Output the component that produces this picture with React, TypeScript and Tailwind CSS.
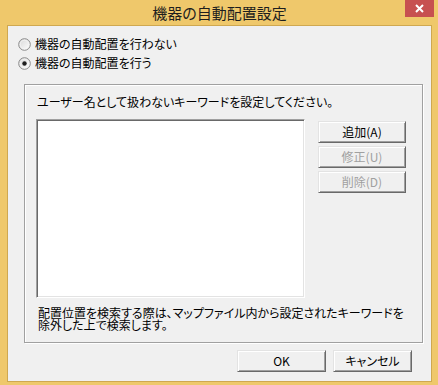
import React from "react";

const font = "font-['Noto_Sans_CJK_JP','Noto_Sans_CJK_SC',sans-serif] [font-feature-settings:'palt']";

function Radio({ checked }: { checked?: boolean }) {
  return (
    <svg width="13" height="13" viewBox="0 0 13 13" className="shrink-0">
      <defs>
        <linearGradient id={checked ? "rg1" : "rg0"} x1="0" y1="0" x2="1" y2="1">
          <stop offset="0" stopColor="#d6d6d6" />
          <stop offset="1" stopColor="#ffffff" />
        </linearGradient>
      </defs>
      <circle cx="6.5" cy="6.5" r="5.8" fill={`url(#${checked ? "rg1" : "rg0"})`} stroke="#8a8a8a" strokeWidth="1" />
      <circle cx="6.5" cy="6.5" r="4.3" fill="none" stroke="#f4f4f4" strokeWidth="0.8" />
      {checked && <circle cx="6.5" cy="6.5" r="2.2" fill="#1e1e1e" />}
    </svg>
  );
}

function Btn({ label, w, disabled }: { label: string; w: string; disabled?: boolean }) {
  return (
    <div
      className={`${w} h-[22px] flex items-center justify-center bg-[#f0f0f0] border border-t-[#e3e3e3] border-l-[#e3e3e3] border-r-[#696969] border-b-[#696969] shadow-[inset_1px_1px_0_#ffffff,inset_-1px_-1px_0_#a0a0a0] text-[12px] leading-[14px] ${
        disabled ? "text-[#a0a0a0]" : "text-black"
      }`}
    >
      {label}
    </div>
  );
}

export default function App() {
  return (
    <div className={`w-[438px] h-[385px] bg-[#efc86b] flex flex-col ${font}`}>
      <div className="h-[25px] relative flex items-center justify-center">
        <span className="text-[15px] leading-[18px] text-[#1e1e1e] pl-[1px]">機器の自動配置設定</span>
        <div className="absolute left-[405px] top-0 w-[29px] h-[17px] bg-[#c75050] flex items-center justify-center">
          <svg width="9" height="9" viewBox="0 0 9 9">
            <path d="M1 1 L8 8 M8 1 L1 8" stroke="#ffffff" strokeWidth="2" />
          </svg>
        </div>
      </div>
      <div className="ml-[7px] w-[425px] h-[357px] border border-[#cfa850] bg-[#f0f0f0] flex flex-col text-black text-[12px]">
        <div className="pl-[10px] pt-[10px] flex flex-col gap-[3px]">
          <div className="h-[16px] flex items-center gap-[4px]">
            <Radio />
            <span className="leading-[16px]">機器の自動配置を行わない</span>
          </div>
          <div className="h-[16px] flex items-center gap-[4px]">
            <Radio checked />
            <span className="leading-[16px]">機器の自動配置を行う</span>
          </div>
        </div>
        <div className="mt-[13px] ml-[16px] w-[399px] h-[259px] border border-[#a0a0a0] shadow-[inset_1px_1px_0_#ffffff,1px_1px_0_#ffffff] pl-[11px] pt-[9px] flex flex-col">
          <div className="ml-[1px] leading-[16px] h-[16px] whitespace-nowrap">
            ユーザー名として扱わないキーワードを設定してください。
          </div>
          <div className="mt-[9px] flex">
            <div className="w-[269px] h-[179px] bg-white border border-t-[#a0a0a0] border-l-[#a0a0a0] border-r-white border-b-white shadow-[inset_1px_1px_0_#696969,inset_-1px_-1px_0_#e3e3e3]" />
            <div className="ml-[13px] mt-[2px] flex flex-col gap-[3px]">
              <Btn label="追加(A)" w="w-[88px]" />
              <Btn label="修正(U)" w="w-[88px]" disabled />
              <Btn label="削除(D)" w="w-[88px]" disabled />
            </div>
          </div>
          <div className="mt-[9px] ml-[2px] flex flex-col whitespace-nowrap">
            <div className="h-[12px] leading-[12px]">配置位置を検索する際は、マップファイル内から設定されたキーワードを</div>
            <div className="h-[12px] leading-[12px]">除外した上で検索します。</div>
          </div>
        </div>
        <div className="mt-[7px] flex justify-end pr-[19px] gap-[7px]">
          <Btn label="OK" w="w-[89px]" />
          <Btn label="キャンセル" w="w-[79px]" />
        </div>
      </div>
    </div>
  );
}
